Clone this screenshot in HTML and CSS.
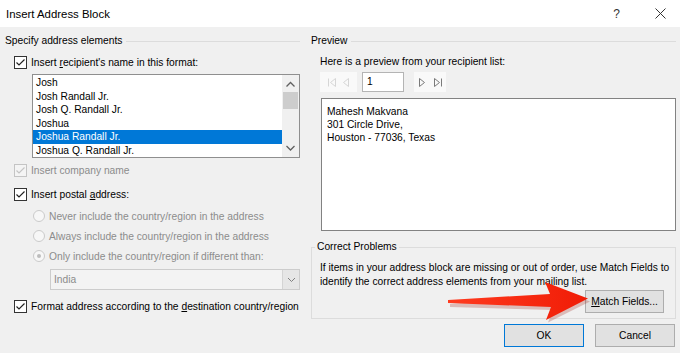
FILE: index.html
```html
<!DOCTYPE html>
<html>
<head>
<meta charset="utf-8">
<link rel="stylesheet" href="styles.css">
</head>
<body>
<div class="titlebar">
  <span class="title">Insert Address Block</span>
  <span class="help">?</span>
  <svg class="close" width="11" height="11" viewBox="0 0 11 11"><path d="M0.5 0.5 L10.5 10.5 M10.5 0.5 L0.5 10.5" stroke="#333" stroke-width="1" fill="none"/></svg>
</div>
<div class="main">
  <div class="col-left">
    <div class="group-head"><span>Specify address elements</span><span class="rule"></span></div>
    <div class="check-row first">
      <span class="cb"><svg width="13" height="13" viewBox="0 0 13 13"><path d="M2.5 6.5 L5 9 L10.5 3.5" stroke="#222" stroke-width="1.2" fill="none"/></svg></span>
      <span>Insert <u>r</u>ecipient's name in this format:</span>
    </div>
    <div class="listbox">
      <div class="items">
        <div class="item">Josh</div>
        <div class="item">Josh Randall Jr.</div>
        <div class="item">Josh Q. Randall Jr.</div>
        <div class="item">Joshua</div>
        <div class="item selected">Joshua Randall Jr.</div>
        <div class="item">Joshua Q. Randall Jr.</div>
      </div>
      <div class="scrollbar">
        <svg class="chev-up" width="17" height="12" viewBox="0 0 17 12"><path d="M4.5 7.5 L8.5 3.5 L12.5 7.5" stroke="#606060" stroke-width="1.3" fill="none"/></svg>
        <div class="thumb"></div>
        <span class="sb-fill"></span>
        <svg class="chev-down" width="17" height="12" viewBox="0 0 17 12"><path d="M4.5 4 L8.5 8 L12.5 4" stroke="#606060" stroke-width="1.3" fill="none"/></svg>
      </div>
    </div>
    <div class="check-row company disabled">
      <span class="cb"><svg width="13" height="13" viewBox="0 0 13 13"><path d="M2.5 6.5 L5 9 L10.5 3.5" stroke="#c4c4c4" stroke-width="1.2" fill="none"/></svg></span>
      <span>Insert company name</span>
    </div>
    <div class="check-row postal">
      <span class="cb"><svg width="13" height="13" viewBox="0 0 13 13"><path d="M2.5 6.5 L5 9 L10.5 3.5" stroke="#222" stroke-width="1.2" fill="none"/></svg></span>
      <span>Insert postal <u>a</u>ddress:</span>
    </div>
    <div class="radios">
      <div class="radio-row"><span class="radio"></span><span>Never include the country/region in the address</span></div>
      <div class="radio-row"><span class="radio"></span><span>Always include the country/region in the address</span></div>
      <div class="radio-row"><span class="radio on"></span><span>Only include the country/region if different than:</span></div>
    </div>
    <div class="dropdown">
      <span class="dd-text">India</span>
      <span class="dd-btn"><svg width="9" height="6" viewBox="0 0 9 6"><path d="M1 1 L4.5 4.5 L8 1" stroke="#808080" stroke-width="1" fill="none"/></svg></span>
    </div>
    <div class="check-row format">
      <span class="cb"><svg width="13" height="13" viewBox="0 0 13 13"><path d="M2.5 6.5 L5 9 L10.5 3.5" stroke="#222" stroke-width="1.2" fill="none"/></svg></span>
      <span>Format address according to the <u>d</u>estination country/region</span>
    </div>
  </div>
  <div class="col-right">
    <div class="group-head"><span>Preview</span><span class="rule"></span></div>
    <div class="hint">Here is a preview from your recipient list:</div>
    <div class="nav">
      <div class="nav-group g1">
        <svg width="8" height="9" viewBox="0 0 8 9"><path d="M0.5 0.5 V8.5 M7.5 0.5 L2.5 4.5 L7.5 8.5 Z" stroke="#d6d6d6" stroke-width="1" fill="none"/></svg>
        <svg width="6" height="9" viewBox="0 0 6 9"><path d="M5.5 0.5 L0.5 4.5 L5.5 8.5 Z" stroke="#d6d6d6" stroke-width="1" fill="none"/></svg>
      </div>
      <div class="nav-input">1</div>
      <div class="nav-group g2">
        <svg width="6" height="9" viewBox="0 0 6 9"><path d="M0.5 0.5 L5.5 4.5 L0.5 8.5 Z" stroke="#7a7a7a" stroke-width="1" fill="none"/></svg>
        <svg width="8" height="9" viewBox="0 0 8 9"><path d="M7.5 0.5 V8.5 M0.5 0.5 L5.5 4.5 L0.5 8.5 Z" stroke="#7a7a7a" stroke-width="1" fill="none"/></svg>
      </div>
    </div>
    <div class="preview">
      <div>Mahesh Makvana</div>
      <div>301 Circle Drive,</div>
      <div>Houston - 77036, Texas</div>
    </div>
    <div class="problems">
      <div class="legend">Correct Problems</div>
      <p class="problems-text">If items in your address block are missing or out of order, use Match Fields to identify the correct address elements from your mailing list.</p>
      <div class="problems-actions"><button class="btn match"><u>M</u>atch Fields...</button></div>
    </div>
    <div class="footer">
      <button class="btn ok">OK</button>
      <button class="btn">Cancel</button>
    </div>
  </div>
</div>
<svg class="arrow" width="680" height="353" viewBox="0 0 680 353">
  <defs>
    <linearGradient id="ag" x1="0" y1="0" x2="1" y2="0">
      <stop offset="0" stop-color="#ff3b1f"/>
      <stop offset="1" stop-color="#f01c06"/>
    </linearGradient>
  </defs>
  <path d="M449 302.5 L449 305.5 L552 308.5 L547 321 L589 300 L546 283 L551 295.5 Z" fill="#9a1a10" opacity="0.25" transform="translate(1,1.5)"/>
  <path d="M448 300 L448 303 L551 307 L546 320 L588 298.5 L545 282 L550 294 Z" fill="url(#ag)"/>
</svg>
</body>
</html>
```
FILE: styles.css
```css
* { box-sizing: border-box; }
html, body { margin: 0; padding: 0; }
body {
  width: 680px;
  height: 353px;
  overflow: hidden;
  position: relative;
  background: #f0f0f0;
  font-family: "Liberation Sans", Arial, sans-serif;
  font-size: 10.25px;
  color: #000;
}
u { text-decoration: underline; text-underline-offset: 1px; }

.titlebar {
  height: 27px;
  background: #fff;
  display: flex;
  align-items: center;
  padding-left: 6px;
}
.title { font-size: 11.4px; flex: 1; color: #000; }
.help { font-size: 12px; color: #333; margin-right: 35px; }
.close { margin-right: 14px; }

.main {
  display: flex;
  padding: 0 4px 0 5px;
  gap: 11px;
}
.col-left { width: 295px; display: flex; flex-direction: column; }
.col-right { width: 365px; display: flex; flex-direction: column; }

.group-head {
  margin-top: 7px;
  height: 14px;
  line-height: 14px;
  display: flex;
  align-items: center;
}
.group-head .rule {
  flex: 1;
  height: 1px;
  background: #dcdcdc;
  margin-left: 4px;
}

.check-row {
  display: flex;
  align-items: center;
  height: 13px;
  line-height: 13px;
  white-space: nowrap;
}
.check-row .cb {
  width: 13px;
  height: 13px;
  border: 1px solid #333;
  background: #fff;
  margin-left: 9px;
  margin-right: 4px;
  flex: none;
}
.check-row .cb svg { display: block; margin: -1px; }
.check-row.first { margin-top: 8px; }
.check-row.company { margin-top: 6px; }
.check-row.postal { margin-top: 11px; }
.check-row.format { margin-top: 10px; }
.disabled { color: #8c8c8c; }
.disabled .cb { border-color: #c4c4c4; background: #f4f4f4; }

.listbox {
  margin-top: 5px;
  margin-left: 27px;
  width: 268px;
  height: 84px;
  border: 1px solid #8f8f8f;
  background: #fff;
  display: flex;
}
.items { flex: 1; padding-top: 1px; overflow: hidden; }
.item {
  height: 13.5px;
  line-height: 13.5px;
  padding-left: 3px;
  white-space: nowrap;
}
.item.selected { background: #0078d7; color: #fff; }
.scrollbar {
  width: 17px;
  background: #f0f0f0;
  display: flex;
  flex-direction: column;
  align-items: center;
}
.chev-up { display: block; margin-top: 4px; flex: none; }
.thumb { width: 15px; height: 17px; background: #cdcdcd; margin-top: 1px; flex: none; }
.sb-fill { flex: 1; }
.chev-down { display: block; margin-bottom: 3px; flex: none; }

.radios { margin-top: 5px; }
.radio-row {
  height: 20px;
  display: flex;
  align-items: center;
  color: #8c8c8c;
  white-space: nowrap;
}
.radio {
  width: 12px;
  height: 12px;
  border-radius: 50%;
  border: 1px solid #cbcbcb;
  background: #f7f7f7;
  margin-left: 28px;
  margin-right: 4px;
  display: flex;
  align-items: center;
  justify-content: center;
  flex: none;
}
.radio.on::after {
  content: "";
  width: 4px;
  height: 4px;
  border-radius: 50%;
  background: #bdbdbd;
}

.dropdown {
  margin-top: 3px;
  margin-left: 45px;
  width: 250px;
  height: 21px;
  border: 1px solid #cccccc;
  background: #f3f3f3;
  display: flex;
  align-items: stretch;
  color: #8c8c8c;
}
.dd-text { flex: 1; padding-left: 3px; line-height: 19px; }
.dd-btn {
  width: 17px;
  background: #e6e6e6;
  border-left: 1px solid #d4d4d4;
  display: flex;
  align-items: center;
  justify-content: center;
}
.dd-btn svg { display: block; }

.hint { margin-top: 7px; margin-left: 9px; height: 14px; line-height: 14px; white-space: nowrap; }
.nav {
  margin-top: 3px;
  margin-left: 9px;
  height: 20px;
  display: flex;
  align-items: stretch;
}
.nav-group {
  background: #f9f9f9;
  display: flex;
  align-items: center;
  justify-content: center;
  gap: 7px;
}
.nav-group svg { display: block; }
.g1 { width: 37px; }
.g2 { width: 32px; margin-left: 10px; gap: 9px; }
.nav-input {
  margin-left: 5px;
  width: 42px;
  background: #fff;
  border: 1px solid #b4b4b4;
  padding-left: 4px;
  line-height: 17px;
}

.preview {
  margin-top: 6px;
  margin-left: 10px;
  width: 355px;
  height: 133px;
  border: 1px solid #828282;
  background: #fff;
  padding: 6px 5px;
  line-height: 13px;
}

.problems {
  margin-top: 16px;
  height: 72px;
  border: 1px solid #dcdcdc;
  display: flex;
  flex-direction: column;
}
.legend {
  align-self: flex-start;
  margin: -8px 0 0 3px;
  padding: 0 2px;
  background: #f0f0f0;
  height: 14px;
  line-height: 14px;
}
.problems-text {
  margin: 7px 0 0 8px;
  width: 352px;
  line-height: 13.5px;
}
.problems-actions {
  margin-top: 2px;
  display: flex;
  justify-content: flex-end;
  padding-right: 11px;
}

.btn {
  font-family: inherit;
  font-size: 10.25px;
  color: #000;
  background: #e1e1e1;
  border: 1px solid #adadad;
  width: 80px;
  height: 23px;
  padding: 0;
  margin: 0;
}
.btn.match { width: 79px; }
.btn.ok { border-color: #0078d7; }

.footer {
  margin-top: 5px;
  display: flex;
  justify-content: flex-end;
  gap: 11px;
  padding-right: 1px;
}

.arrow {
  position: absolute;
  left: 0;
  top: 0;
  pointer-events: none;
}
```
